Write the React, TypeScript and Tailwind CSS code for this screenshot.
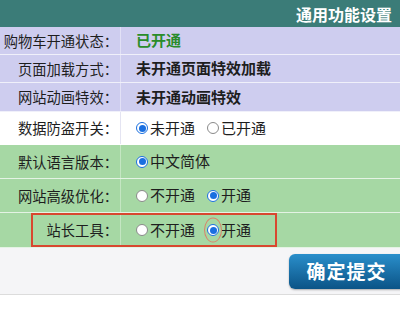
import React from "react";

type Opt = { label: string; checked?: boolean; circled?: boolean };

function Radio({ checked }: { checked?: boolean }) {
  return (
    <span
      className={`inline-flex h-[12px] w-[12px] items-center justify-center rounded-full border bg-white ${
        checked ? "border-[#1a6fe0]" : "border-[#8a8a8a]"
      }`}
    >
      {checked && <span className="h-[7px] w-[7px] rounded-full bg-[#1a6fe0]" />}
    </span>
  );
}

function Options({ opts }: { opts: Opt[] }) {
  return (
    <div className="flex items-center gap-[12px]">
      {opts.map((o) => (
        <label key={o.label} className="relative flex items-center gap-[2px]">
          <Radio checked={o.checked} />
          <span>{o.label}</span>
          {o.circled && (
            <span className="absolute left-[-3px] top-1/2 h-[25px] w-[18px] -translate-y-1/2 rounded-[50%] border border-[#d9826a]" />
          )}
        </label>
      ))}
    </div>
  );
}

function Row({
  label,
  bg,
  h,
  children,
  divider,
}: {
  label: string;
  bg: string;
  h: string;
  children: React.ReactNode;
  divider: string;
}) {
  return (
    <div className={`flex border-b border-white/70 ${bg} ${h}`}>
      <div
        className={`flex w-[121px] shrink-0 items-center justify-end whitespace-nowrap pr-[2px] text-[14.3px] border-r ${divider}`}
      >
        {label}
      </div>
      <div className="flex flex-1 items-center pl-[15px]">{children}</div>
    </div>
  );
}

export default function App() {
  const lav = "bg-[#cecdef]";
  const green = "bg-[#a6d8a4]";
  return (
    <div
      className="relative h-[320px] w-[400px] overflow-hidden bg-white text-[15px] text-[#1e1e1e]"
      style={{ fontFamily: '"Noto Sans CJK SC", "Noto Sans", sans-serif' }}
    >
      <div className="flex h-[27px] items-center justify-end bg-[#3b7c78] pr-[8px] text-[16px] font-bold text-white">
        通用功能设置
      </div>
      <Row label="购物车开通状态：" bg={lav} h="h-[28px]" divider="border-[#e2e1f6]">
        <span className="font-bold text-[#2a8c2a]">已开通</span>
      </Row>
      <Row label="页面加载方式：" bg={lav} h="h-[28px]" divider="border-[#e2e1f6]">
        <span className="font-bold">未开通页面特效加载</span>
      </Row>
      <Row label="网站动画特效：" bg={lav} h="h-[29px]" divider="border-[#e2e1f6]">
        <span className="font-bold">未开通动画特效</span>
      </Row>
      <Row label="数据防盗开关：" bg="bg-white" h="h-[33px]" divider="border-[#e4e4f2]">
        <Options opts={[{ label: "未开通", checked: true }, { label: "已开通" }]} />
      </Row>
      <Row label="默认语言版本：" bg={green} h="h-[34px]" divider="border-[#c4e6c2]">
        <Options opts={[{ label: "中文简体", checked: true }]} />
      </Row>
      <Row label="网站高级优化：" bg={green} h="h-[34px]" divider="border-[#c4e6c2]">
        <Options opts={[{ label: "不开通" }, { label: "开通", checked: true }]} />
      </Row>
      <div className="relative">
        <Row label="站长工具：" bg={green} h="h-[35px]" divider="border-[#c4e6c2]">
          <Options opts={[{ label: "不开通" }, { label: "开通", checked: true, circled: true }]} />
        </Row>
        <div className="absolute left-[31px] top-0 h-[34px] w-[246px] border-2 border-[#d8472f]" />
      </div>
      <div className="flex h-[47px] items-center justify-end border-b border-[#dcdcdc] bg-[#f5f5f7]">
        <button className="mr-[-12px] h-[35px] w-[123px] rounded-[6px] bg-gradient-to-b from-[#2a8fcb] to-[#0b5487] pr-[8px] text-[19px] font-bold tracking-[1px] text-white shadow-[0_1px_2px_rgba(0,0,0,0.3)]">
          确定提交
        </button>
      </div>
    </div>
  );
}
